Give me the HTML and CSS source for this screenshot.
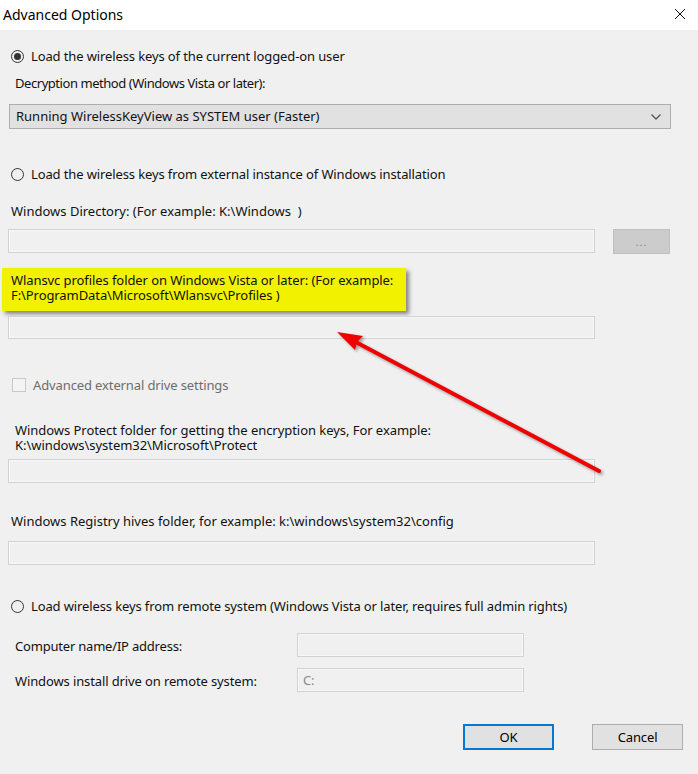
FILE: index.html
```html
<!DOCTYPE html>
<html>
<head>
<meta charset="utf-8">
<link rel="stylesheet" href="styles.css">
</head>
<body>
<div class="window">
  <div class="titlebar">
    <span class="title">Advanced Options</span>
    <svg class="close" width="12" height="12" viewBox="0 0 12 12"><path d="M1 1 L11 11 M11 1 L1 11" stroke="#111" stroke-width="1" fill="none"/></svg>
  </div>
  <div class="content">
    <div class="radio-row r1"><span class="radio checked"></span><span>Load the wireless keys of the current logged-on user</span></div>
    <div class="label indent l-decrypt">Decryption method (Windows Vista or later):</div>
    <div class="select"><span class="sel-text">Running WirelessKeyView as SYSTEM user (Faster)</span><svg class="chev" width="12" height="8" viewBox="0 0 12 8"><path d="M1.5 1.5 L6 6 L10.5 1.5" stroke="#555" stroke-width="1.3" fill="none"/></svg></div>
    <div class="radio-row r2"><span class="radio"></span><span>Load the wireless keys from external instance of Windows installation</span></div>
    <div class="label l-dir">Windows Directory: (For example: K:\Windows&nbsp; )</div>
    <div class="input-row">
      <div class="input wide"></div>
      <div class="browse">...</div>
    </div>
    <div class="highlight">Wlansvc profiles folder on Windows Vista or later: (For example:<br>F:\ProgramData\Microsoft\Wlansvc\Profiles )</div>
    <div class="input wide i-wlan"></div>
    <div class="check-row"><span class="checkbox"></span><span>Advanced external drive settings</span></div>
    <div class="label indent l-protect">Windows Protect folder for getting the encryption keys, For example:<br>K:\windows\system32\Microsoft\Protect</div>
    <div class="input wide i-protect"></div>
    <div class="label l-reg">Windows Registry hives folder, for example: k:\windows\system32\config</div>
    <div class="input wide i-reg"></div>
    <div class="radio-row r3"><span class="radio"></span><span>Load wireless keys from remote system (Windows Vista or later, requires full admin rights)</span></div>
    <div class="field-row f1"><span class="field-label">Computer name/IP address:</span><div class="input small"></div></div>
    <div class="field-row f2"><span class="field-label">Windows install drive on remote system:</span><div class="input small"><span class="ph">C:</span></div></div>
    <div class="buttons"><div class="btn ok">OK</div><div class="btn">Cancel</div></div>
  </div>
  <svg class="arrow" width="698" height="774" viewBox="0 0 698 774">
    <g class="arrow-g">
      <line x1="599" y1="471" x2="352" y2="340" stroke="#f00000" stroke-width="4" stroke-linecap="round"/>
      <polygon points="337,332 363,336 357,342 355,350" fill="#f00000"/>
    </g>
  </svg>
</div>
</body>
</html>
```

FILE: styles.css
```css
* { box-sizing: border-box; }
html, body { margin: 0; padding: 0; }
body {
  font-family: "Noto Sans", "Open Sans", sans-serif;
  font-size: 13px;
  letter-spacing: -0.12px;
  color: #111;
}
.window {
  position: relative;
  width: 698px;
  height: 774px;
  background: #f0f0f0;
  overflow: hidden;
}
.titlebar {
  height: 30px;
  background: #fff;
  display: flex;
  align-items: center;
  justify-content: space-between;
  padding: 0 12px 0 3px;
}
.title {
  font-size: 14px;
  letter-spacing: 0;
  color: #000;
  margin-top: -2px;
}
.close { margin-top: -2px; }
.content {
  display: flex;
  flex-direction: column;
  align-items: flex-start;
  padding-left: 8px;
  line-height: 15px;
}
.radio-row, .check-row {
  display: flex;
  align-items: center;
  height: 16px;
  margin-left: 3px;
  gap: 7px;
}
.radio {
  width: 13px;
  height: 13px;
  border: 1px solid #333;
  border-radius: 50%;
  display: flex;
  align-items: center;
  justify-content: center;
  flex: none;
}
.radio.checked::after {
  content: "";
  width: 7px;
  height: 7px;
  border-radius: 50%;
  background: #333;
}
.r1 { margin-top: 18px; }
.r2 { margin-top: 37px; }
.r3 { margin-top: 33px; }
.label { padding-left: 3px; }
.label.indent { padding-left: 7px; }
.l-decrypt { margin-top: 12px; letter-spacing: -0.45px; }
.l-dir { margin-top: 22px; letter-spacing: 0; }
.l-protect { margin-top: 30px; letter-spacing: -0.05px; }
.l-reg { margin-top: 31px; letter-spacing: 0; }
.select {
  margin-top: 13px;
  margin-left: 1px;
  width: 662px;
  height: 25px;
  background: #e1e1e1;
  border: 1px solid #adadad;
  display: flex;
  align-items: center;
  justify-content: space-between;
  padding: 0 8px 0 6px;
}
.sel-text { letter-spacing: 0; }
.input {
  height: 24px;
  border: 1px solid #d2d2d2;
  background: #f0f0f0;
  box-shadow: inset 0 0 0 1px #f7f7f7;
}
.input.wide { width: 587px; }
.input-row {
  margin-top: 10px;
  display: flex;
  align-items: flex-start;
  height: 25px;
}
.browse {
  margin-left: 18px;
  width: 57px;
  height: 25px;
  background: #cccccc;
  border: 1px solid #bfbfbf;
  color: #888;
  font-size: 11px;
  text-align: center;
  line-height: 24px;
  letter-spacing: 1px;
}
.highlight {
  margin-top: 14px;
  margin-left: -6px;
  width: 404px;
  height: 43px;
  padding: 5px 0 0 9px;
  background: #f2f200;
  letter-spacing: -0.08px;
  box-shadow: 3px 3px 4px rgba(0,0,0,0.45);
}
.i-wlan { margin-top: 5px; height: 23px; }
.check-row { margin-top: 38px; margin-left: 4px; color: #6d6d6d; }
.checkbox {
  width: 14px;
  height: 14px;
  border: 1px solid #c8c8c8;
  background: #f4f4f4;
  flex: none;
}
.i-protect { margin-top: 6px; }
.i-reg { margin-top: 12px; }
.field-row {
  display: flex;
  align-items: center;
  height: 24px;
}
.field-label {
  width: 289px;
  padding-left: 7px;
  padding-top: 3px;
}
.f1 { margin-top: 19px; }
.f1 .field-label { letter-spacing: -0.2px; }
.f2 { margin-top: 11px; }
.input.small {
  width: 227px;
  padding-left: 5px;
  display: flex;
  align-items: center;
}
.ph { color: #8a8a8a; }
.buttons {
  margin-top: 32px;
  margin-left: 455px;
  display: flex;
  gap: 38px;
}
.btn {
  width: 91px;
  height: 26px;
  background: #e1e1e1;
  border: 1px solid #adadad;
  display: flex;
  align-items: center;
  justify-content: center;
  color: #000;
}
.btn.ok { border: 2px solid #0078d7; }
.arrow {
  position: absolute;
  left: 0;
  top: 0;
  pointer-events: none;
}
.arrow-g { filter: drop-shadow(2px 2px 1.5px rgba(0,0,0,0.35)); }
```
